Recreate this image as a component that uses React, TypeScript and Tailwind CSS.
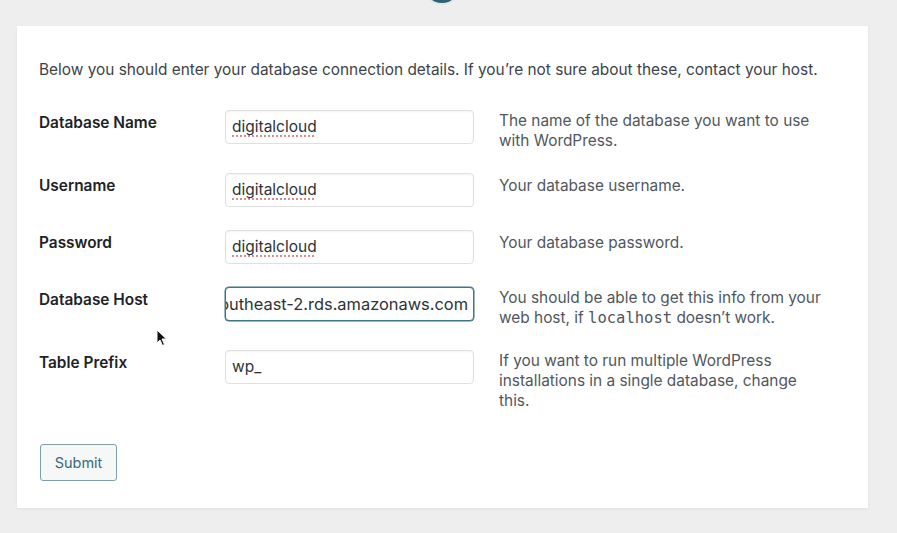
import React from "react";

const font = { fontFamily: "Inter, 'Noto Sans', 'Liberation Sans', sans-serif" };

function Field({ children, focused }: { children: React.ReactNode; focused?: boolean }) {
  return (
    <div
      className={
        "h-[34px] w-[249px] shrink-0 rounded-[4px] bg-white flex items-center overflow-hidden whitespace-nowrap text-[#2c3338] " +
        (focused
          ? "text-[16.4px] border-[1.5px] border-[#3d7786] justify-end pr-[5px] shadow-[0_0_0_0.5px_#3d7786]"
          : "text-[15.5px] border border-[#e0e0e2] pl-[6px] shadow-[inset_0_1px_2px_rgba(0,0,0,0.05)]")
      }
    >
      {children}
    </div>
  );
}

function Spell({ children }: { children: React.ReactNode }) {
  return (
    <span className="underline decoration-dotted decoration-[#d98a8a] underline-offset-[3px] decoration-[1.5px]">
      {children}
    </span>
  );
}

function Row({
  label,
  h,
  field,
  desc,
}: {
  label: string;
  h: string;
  field: React.ReactNode;
  desc: React.ReactNode;
}) {
  return (
    <div className={"flex items-start " + h}>
      <div className="w-[186px] shrink-0 pt-[3px] text-[15.4px] leading-[20px] font-semibold text-[#1d2327]">
        {label}
      </div>
      {field}
      <div className="ml-[25px] w-[328px] pt-[1px] text-[15.4px] leading-[20px] text-[#50575e]">{desc}</div>
    </div>
  );
}

export default function App() {
  return (
    <div className="relative min-h-[533px] w-[897px] overflow-hidden bg-[#eeeeee]" style={font}>
      {/* logo remnant */}
      <div className="absolute left-[424px] top-[-33px] h-[36px] w-[36px] rounded-full bg-[#2f6270] shadow-[0_0_0_2px_#e4e8ee]" />

      <div className="ml-[17px] mt-[26px] w-[851px] bg-white pl-[22px] pt-[34px] pb-[27px] shadow-[0_1px_3px_rgba(0,0,0,0.06)]">
        <p className="whitespace-nowrap text-[15.4px] leading-[20px] text-[#3c434a]">
          Below you should enter your database connection details. If you’re not sure about these, contact your host.
        </p>

        <div className="mt-[30px] flex flex-col">
          <Row
            label="Database Name"
            h="h-[63px]"
            field={
              <Field>
                <Spell>digitalcloud</Spell>
              </Field>
            }
            desc={<>The name of the database you want to use with WordPress.</>}
          />
          <Row
            label="Username"
            h="h-[57px]"
            field={
              <Field>
                <Spell>digitalcloud</Spell>
              </Field>
            }
            desc={<div className="pt-[2px]">Your database username.</div>}
          />
          <Row
            label="Password"
            h="h-[57px]"
            field={
              <Field>
                <Spell>digitalcloud</Spell>
              </Field>
            }
            desc={<div className="pt-[2px]">Your database password.</div>}
          />
          <Row
            label="Database Host"
            h="h-[63px]"
            field={
              <Field focused>
                <span>digitalcloud.cxyz12ab.ap-southeast-2.rds.amazonaws.com</span>
              </Field>
            }
            desc={
              <>
                You should be able to get this info from your web host, if{" "}
                <code className="text-[15.5px]" style={{ fontFamily: "'DejaVu Sans Mono', 'Liberation Mono', monospace" }}>
                  localhost
                </code>{" "}
                doesn’t work.
              </>
            }
          />
          <Row
            label="Table Prefix"
            h="h-[63px]"
            field={<Field>wp_</Field>}
            desc={<>If you want to run multiple WordPress installations in a single database, change this.</>}
          />
        </div>

        <button className="mt-[31px] ml-[1px] h-[37px] w-[77px] rounded-[3px] border border-[#7f9ea8] bg-[#f6f7f7] text-[14.5px] text-[#3a6a7c]">
          Submit
        </button>
      </div>

      {/* mouse pointer */}
      <svg className="absolute left-[156px] top-[329px]" width="12" height="18" viewBox="0 0 12 18">
        <path d="M1 1 L1 14 L4 11 L6.5 16.5 L8.5 15.5 L6 10 L10.5 10 Z" fill="#111" stroke="#fff" strokeWidth="1" />
      </svg>
    </div>
  );
}
